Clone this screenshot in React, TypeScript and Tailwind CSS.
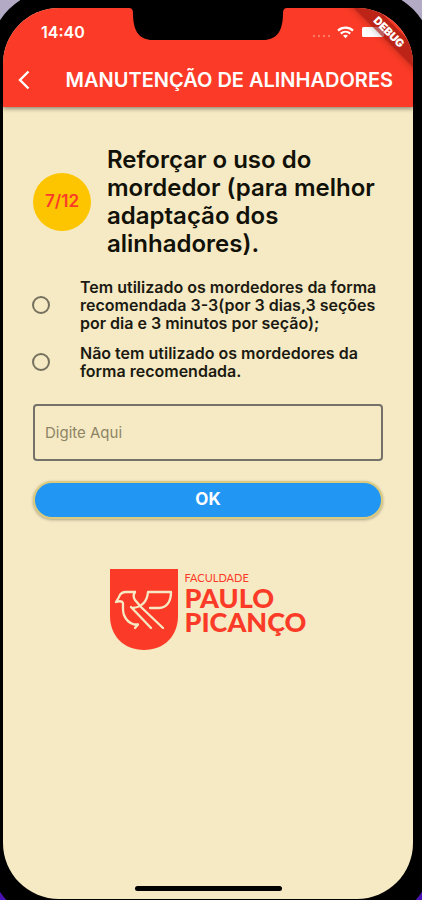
import { useState } from "react";

const options = [
  "Tem utilizado os mordedores da forma recomendada 3-3(por 3 dias,3 seções por dia e 3 minutos por seção);",
  "Não tem utilizado os mordedores da forma recomendada.",
];

function StatusBar() {
  return (
    <div className="flex h-12 items-center justify-between pl-[38px] pr-6 text-white">
      <span className="text-base font-semibold">14:40</span>
      <div className="flex items-center gap-1">
        <svg width="22" height="12" viewBox="0 0 22 12" fill="#ff7a66">
          <circle cx="3" cy="10" r="1.2" />
          <circle cx="8" cy="10" r="1.2" />
          <circle cx="13" cy="10" r="1.2" />
          <circle cx="18" cy="10" r="1.2" />
        </svg>
        <svg width="17" height="13" viewBox="0 0 17 13" fill="none" stroke="white" strokeWidth="2.2">
          <path d="M1 4.6C5.2 .6 11.8 .6 16 4.6" />
          <path d="M3.8 7.6c2.7-2.5 6.7-2.5 9.4 0" />
          <path d="M6 9.6c1.5-1.2 3.5-1.2 5 0l-2.5 2.6Z" fill="white" stroke="none" />
        </svg>
        <svg width="27" height="12" viewBox="0 0 27 12" className="ml-1">
          <rect x="0" y="1" width="22" height="10" rx="1.5" fill="white" />
        </svg>
      </div>
    </div>
  );
}

function Logo() {
  return (
    <div className="flex gap-[7px] text-[#fb3b27]">
      <svg width="68" height="82" viewBox="0 0 68 82" fill="none">
        <path d="M0 0h68v47c0 20-14 34-34 34S0 67 0 47Z" fill="#fb3b27" />
        <g stroke="#f6eac4" strokeWidth="2.3" strokeLinejoin="round" strokeLinecap="round">
          {/* cabeça e peito */}
          <path d="M25 23H16c-4 0-6 2-7 5l-3 5c3-1 6-1 7 1 0 4-.5 8 1 12 2 5 5 8 10 9.500h4L25 59" />
          {/* cauda */}
          <path d="M25 23c-2 3-2 5 0 8l6 7 22 21" />
          <path d="M21 38l20 21" />
          {/* asa */}
          <path d="M23 39c8-1 14-5 15-16h23c0 9-4 16-12 16h-9" />
        </g>
      </svg>
      <div className="flex flex-col pt-px font-['Lato','Open_Sans',sans-serif]">
        <span className="text-[11px] leading-4">FACULDADE</span>
        <span className="text-[27px] font-black leading-6">
          PAULO
          <br />
          PICANÇO
        </span>
      </div>
    </div>
  );
}

export default function App() {
  const [selected, setSelected] = useState<number | null>(null);
  const [answer, setAnswer] = useState("");

  return (
    <div className="flex min-h-screen flex-col overflow-hidden bg-linear-to-b from-[#b3abc6] from-30% to-[#4a12b0] to-90% font-['Inter',sans-serif]">
      {/* moldura do aparelho */}
      <div className="-mx-3 -mb-6 -mt-3 flex grow flex-col rounded-[72px] bg-black pb-[25px] pl-[15px] pr-[21px] pt-5">
        <div className="relative flex grow flex-col overflow-hidden rounded-[56px] bg-[#f6eac4]">
          <header className="bg-[#fb3b27] shadow-[0_2px_4px_rgba(0,0,0,0.4)]">
            <StatusBar />
            <div className="flex h-[51px] items-center pb-[3px] pl-[15px] pr-5 text-white">
              <button type="button" aria-label="Voltar">
                <svg width="12" height="20" viewBox="0 0 12 20" fill="none" stroke="white" strokeWidth="2.4">
                  <path d="M10.5 1.5L2 10l8.5 8.5" />
                </svg>
              </button>
              <h1 className="grow whitespace-nowrap text-right text-xl font-semibold">
                MANUTENÇÃO DE ALINHADORES
              </h1>
            </div>
          </header>

          {/* notch */}
          <svg className="absolute left-1/2 top-0 -translate-x-1/2" width="158" height="32" viewBox="0 0 158 32">
            <path d="M0 0h158q-4 0-4 5c0 18-6 27-20 27H24C10 32 4 23 4 5q0-5-4-5Z" fill="black" />
          </svg>

          {/* faixa de debug */}
          <div className="absolute -right-10 top-4 w-32 rotate-45 bg-[#a31b12]/70 text-center text-[11px] font-black leading-4 text-white shadow-md">
            DEBUG
          </div>

          <main className="flex grow flex-col px-[30px] pt-[39px]">
            <div className="flex items-center gap-4">
              <span className="flex size-[58px] shrink-0 items-center justify-center rounded-full bg-[#fdc500] text-[17px] font-semibold text-[#fb3b27]">
                7/12
              </span>
              <h2 className="text-2xl font-semibold leading-7 text-[#111108]">
                Reforçar o uso do mordedor (para melhor adaptação dos alinhadores).
              </h2>
            </div>

            <div className="mt-5 flex flex-col gap-3">
              {options.map((text, i) => (
                <label key={text} className="flex items-center gap-[30px]">
                  <input
                    type="radio"
                    name="mordedor"
                    checked={selected === i}
                    onChange={() => setSelected(i)}
                    className="-ml-px size-[18px] shrink-0 appearance-none rounded-full border-2 border-[#76715f] checked:border-[5px]"
                  />
                  <span className="text-base font-semibold leading-[18px] text-[#1b1a12]">{text}</span>
                </label>
              ))}
            </div>

            <input
              type="text"
              aria-label="Resposta"
              placeholder="Digite Aqui"
              value={answer}
              onChange={(e) => setAnswer(e.target.value)}
              className="mt-6 h-[57px] w-full rounded-sm border-2 border-[#74726b] bg-transparent px-[10px] text-[15px] text-[#1b1a12] placeholder:text-[#8d8464]"
            />

            <button
              type="button"
              className="mt-5 h-[38px] w-full rounded-full border-2 border-[#dccb7d] bg-[#2296f3] text-[17px] font-bold text-white shadow-[0_1px_3px_rgba(0,0,0,0.3)]"
            >
              OK
            </button>

            <div className="mt-[50px] flex justify-center">
              <Logo />
            </div>
          </main>

          <div className="mx-auto mb-2 h-[5px] w-[147px] rounded-full bg-black" />
        </div>
      </div>
    </div>
  );
}
